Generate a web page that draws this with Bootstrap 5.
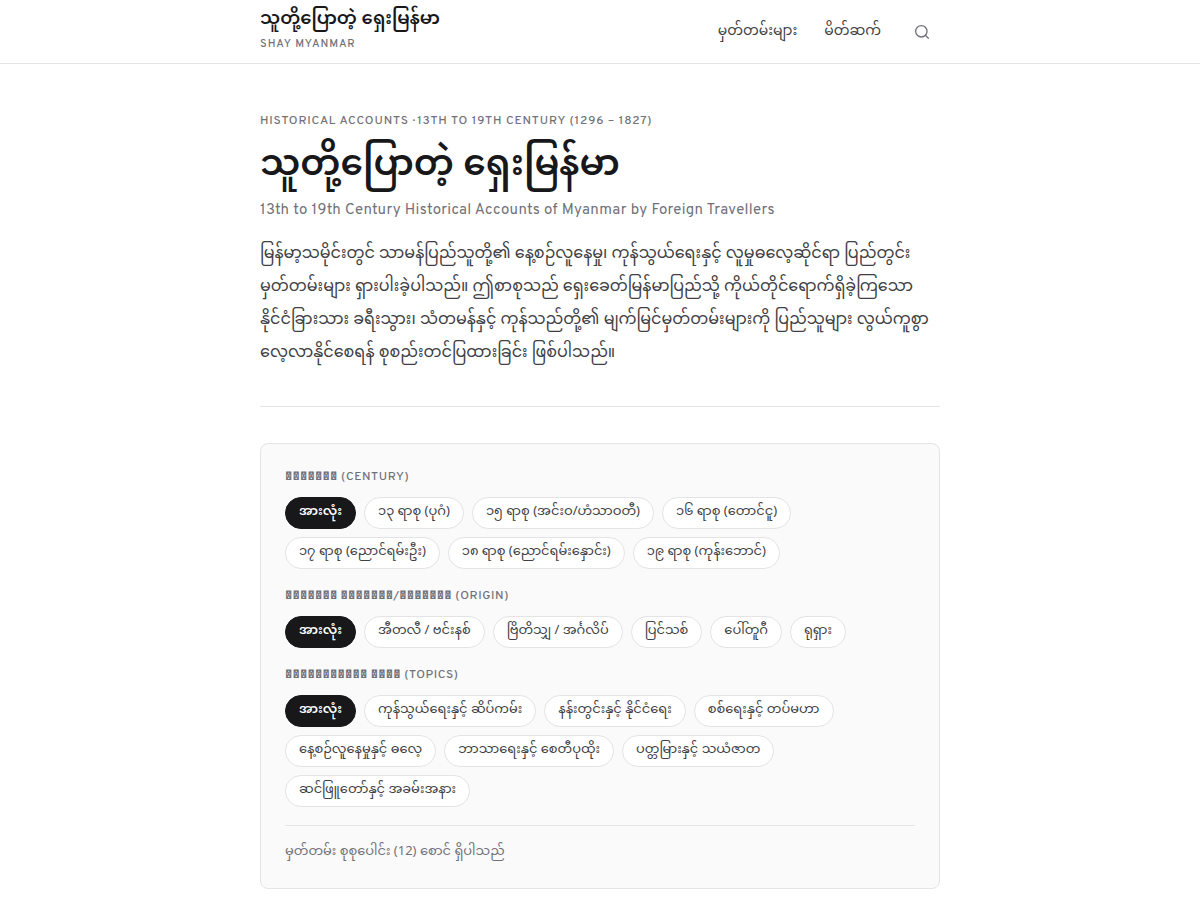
<!DOCTYPE html>
<html lang="my">
<head>
<meta charset="utf-8">
<meta name="viewport" content="width=device-width, initial-scale=1">
<title>သူတို့ပြောတဲ့ ရှေးမြန်မာ</title>
<link href="https://cdn.jsdelivr.net/npm/bootstrap@5.3.0/dist/css/bootstrap.min.css" rel="stylesheet">
<script defer src="https://cdn.jsdelivr.net/npm/bootstrap@5.3.0/dist/js/bootstrap.bundle.min.js"></script>
<style>
  :root { --ink: #18181b; --text: #3f3f46; --muted: #71717a; --line: #e4e4e7; --soft: #fafafa; }
  body { font-family: "Noto Sans Myanmar", "Noto Sans", sans-serif; color: var(--text); }
  .page-column { max-width: 680px; }
  .site-header { height: 64px; border-bottom: 1px solid var(--line); }
  .latin { font-family: Overpass, "Noto Sans", sans-serif; }
  .site-name { font-size: 18px; line-height: 33px; font-weight: 600; color: var(--ink); }
  .caps { font-size: 12px; line-height: 18px; letter-spacing: 0.07em; font-weight: 500; text-transform: uppercase; color: var(--muted); }
  .site-sub { font-size: 11px; line-height: 16px; letter-spacing: 1px; }
  .filter-label { line-height: 19px; letter-spacing: 0.05em; margin-bottom: 10px; }
  .filter-label span { letter-spacing: 0.01em; }
  .site-link { font-size: 14px; line-height: 24px; color: var(--text); text-decoration: none; }
  .site-links { gap: 27px; margin-right: 23px; }
  .search-btn { width: 36px; height: 36px; color: var(--muted); }
  .hero-title { font-size: 36px; line-height: 65px; font-weight: 600; color: var(--ink); }
  .hero-sub { font-size: 15px; line-height: 23px; letter-spacing: 0.02em; color: var(--muted); }
  .hero-text { font-size: 16px; line-height: 33px; }
  .rule { border-top: 1px solid var(--line); margin: 36px 0; }
  .filters { background: var(--soft); border: 1px solid var(--line); border-radius: 8px; }
  .chip-group { margin-bottom: 18px; }
  .chip { height: 32px; padding: 0 13px 2px; font-size: 13px; line-height: 26px; color: var(--text); background: #fff; border: 1px solid var(--line); border-radius: 16px; }
  .chip.active { background: var(--ink); border-color: var(--ink); color: #fff; font-weight: 600; }
  .count { padding-top: 15px; font-size: 13px; line-height: 23px; color: var(--muted); border-top: 1px solid var(--line); }
</style>
</head>
<body>
<header class="site-header">
  <div class="page-column mx-auto h-100 d-flex justify-content-between align-items-center">
    <a href="#" class="text-decoration-none d-block pb-2">
      <span class="site-name d-block">သူတို့ပြောတဲ့ ရှေးမြန်မာ</span>
      <span class="caps site-sub latin d-block">Shay Myanmar</span>
    </a>
    <nav class="d-flex align-items-center">
      <div class="site-links d-flex">
        <a class="site-link" href="#">မှတ်တမ်းများ</a>
        <a class="site-link" href="#">မိတ်ဆက်</a>
      </div>
      <button type="button" class="search-btn btn p-0 border-0 d-flex align-items-center justify-content-center" aria-label="Search">
        <svg width="16" height="16" viewBox="0 0 24 24" fill="none" stroke="currentColor" stroke-width="2" stroke-linecap="round" stroke-linejoin="round"><circle cx="11" cy="11" r="8.500"/><path d="m21.500 21.500-4.500-4.500"/></svg>
      </button>
    </nav>
  </div>
</header>
<main class="page-column mx-auto">
  <section class="pt-5">
    <p class="caps latin mb-1">Historical Accounts · 13th to 19th Century (1296 – 1827)</p>
    <h1 class="hero-title mb-0">သူတို့ပြောတဲ့ ရှေးမြန်မာ</h1>
    <p class="hero-sub latin mb-3">13th to 19th Century Historical Accounts of Myanmar by Foreign Travellers</p>
    <p class="hero-text mb-0">မြန်မာ့သမိုင်းတွင် သာမန်ပြည်သူတို့၏ နေ့စဉ်လူနေမှု၊ ကုန်သွယ်ရေးနှင့် လူမှုဓလေ့ဆိုင်ရာ ပြည်တွင်းမှတ်တမ်းများ ရှားပါးခဲ့ပါသည်။ ဤစာစုသည် ရှေးခေတ်မြန်မာပြည်သို့ ကိုယ်တိုင်ရောက်ရှိခဲ့ကြသော နိုင်ငံခြားသား ခရီးသွား၊ သံတမန်နှင့် ကုန်သည်တို့၏ မျက်မြင်မှတ်တမ်းများကို ပြည်သူများ လွယ်ကူစွာ လေ့လာနိုင်စေရန် စုစည်းတင်ပြထားခြင်း ဖြစ်ပါသည်။</p>
  </section>
  <div class="rule"></div>
  <section class="filters p-4">
    <h2 class="caps filter-label latin"><span>&#xE001;&#xE001;&#xE001;&#xE001;&#xE001;&#xE001;&#xE001;</span> (Century)</h2>
    <div class="chip-group d-flex flex-wrap gap-2">
      <button type="button" class="chip active">အားလုံး</button>
      <button type="button" class="chip">၁၃ ရာစု (ပုဂံ)</button>
      <button type="button" class="chip">၁၅ ရာစု (အင်းဝ/ဟံသာဝတီ)</button>
      <button type="button" class="chip">၁၆ ရာစု (တောင်ငူ)</button>
      <button type="button" class="chip">၁၇ ရာစု (ညောင်ရမ်းဦး)</button>
      <button type="button" class="chip">၁၈ ရာစု (ညောင်ရမ်းနှောင်း)</button>
      <button type="button" class="chip">၁၉ ရာစု (ကုန်းဘောင်)</button>
    </div>
    <h2 class="caps filter-label latin"><span>&#xE001;&#xE001;&#xE001;&#xE001;&#xE001;&#xE001;&#xE001; &#xE001;&#xE001;&#xE001;&#xE001;&#xE001;&#xE001;&#xE001;/&#xE001;&#xE001;&#xE001;&#xE001;&#xE001;&#xE001;&#xE001;</span> (Origin)</h2>
    <div class="chip-group d-flex flex-wrap gap-2">
      <button type="button" class="chip active">အားလုံး</button>
      <button type="button" class="chip">အီတလီ / ဗင်းနစ်</button>
      <button type="button" class="chip">ဗြိတိသျှ / အင်္ဂလိပ်</button>
      <button type="button" class="chip">ပြင်သစ်</button>
      <button type="button" class="chip">ပေါ်တူဂီ</button>
      <button type="button" class="chip">ရုရှား</button>
    </div>
    <h2 class="caps filter-label latin"><span>&#xE001;&#xE001;&#xE001;&#xE001;&#xE001;&#xE001;&#xE001;&#xE001;&#xE001;&#xE001;&#xE001; &#xE001;&#xE001;&#xE001;&#xE001;</span> (Topics)</h2>
    <div class="chip-group d-flex flex-wrap gap-2">
      <button type="button" class="chip active">အားလုံး</button>
      <button type="button" class="chip">ကုန်သွယ်ရေးနှင့် ဆိပ်ကမ်း</button>
      <button type="button" class="chip">နန်းတွင်းနှင့် နိုင်ငံရေး</button>
      <button type="button" class="chip">စစ်ရေးနှင့် တပ်မဟာ</button>
      <button type="button" class="chip">နေ့စဉ်လူနေမှုနှင့် ဓလေ့</button>
      <button type="button" class="chip">ဘာသာရေးနှင့် စေတီပုထိုး</button>
      <button type="button" class="chip">ပတ္တမြားနှင့် သယံဇာတ</button>
      <button type="button" class="chip">ဆင်ဖြူတော်နှင့် အခမ်းအနား</button>
    </div>
    <p class="count mb-0">မှတ်တမ်း စုစုပေါင်း (12) စောင် ရှိပါသည်</p>
  </section>
</main>
</body>
</html>
